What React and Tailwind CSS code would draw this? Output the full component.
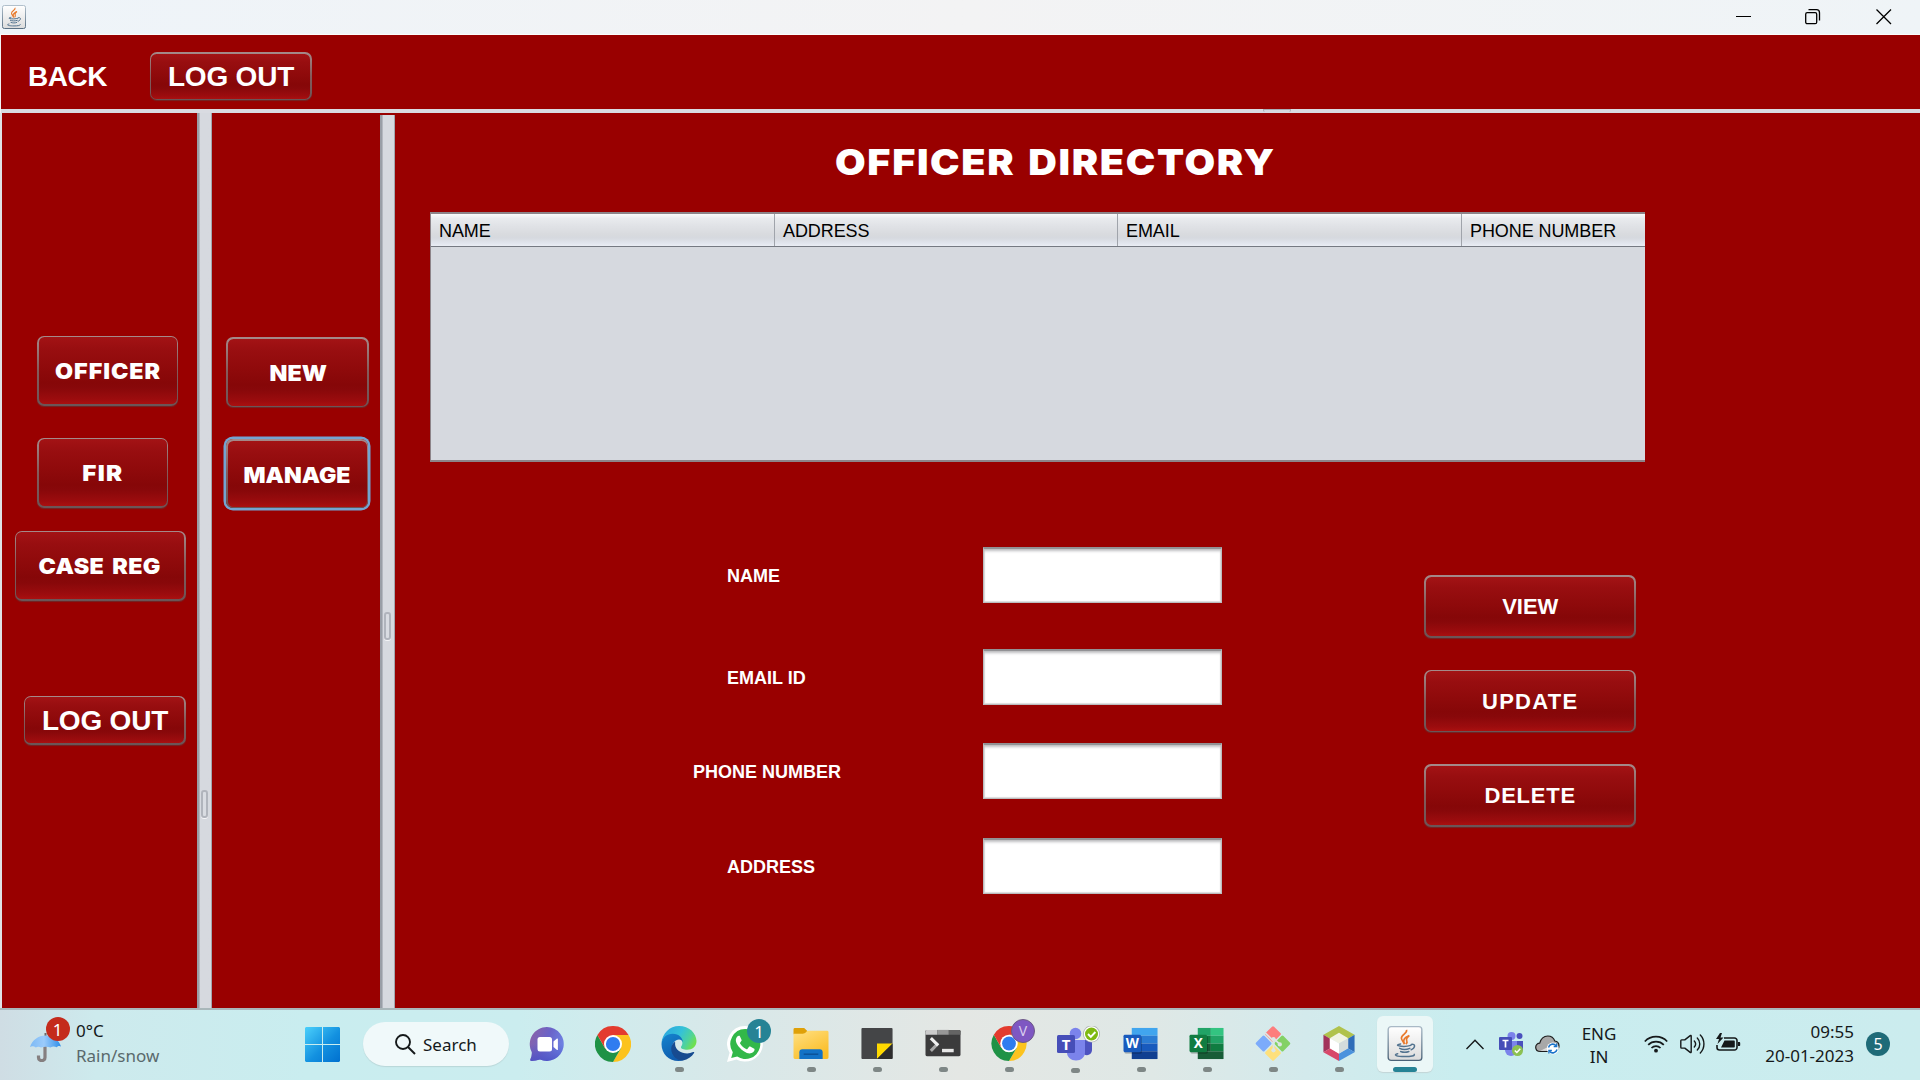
import React from "react";

const ARIAL = "font-['Liberation_Sans',Arial,sans-serif]";
const BLACK = "font-['Inter','Liberation_Sans',sans-serif] font-black";

/* ---------- Swing style widgets ---------- */

function NimbusButton({ className = "", textClass = "", focused = false, children }) {
  return (
    <button
      type="button"
      className={`flex shrink-0 rounded-[7px] bg-linear-to-b from-[#a58a8a] via-[#865a5a] to-[#6a5557] p-[1.5px] ${
        focused
          ? "shadow-[0_0_0_2.5px_#73a4d1]"
          : "shadow-[0_1px_1px_rgba(95,55,55,0.7)]"
      } ${className}`}
    >
      <span className="flex h-full w-full items-center justify-center rounded-[5.5px] bg-[linear-gradient(to_bottom,#a31315_0%,#980e10_18%,#8f0a0b_45%,#860708_68%,#88080a_76%,#9c0c0e_93%,#aa1010_100%)]">
        <span className={`leading-none whitespace-nowrap text-white ${textClass}`}>{children}</span>
      </span>
    </button>
  );
}

function Divider({ className = "", gripClass }) {
  return (
    <div className={`flex w-[15px] shrink-0 justify-center border-r border-[#a2a6ae] bg-linear-to-r from-[#999ea6] from-[14%] via-[#b4b8c0] via-[18%] to-[#d6d9df] to-[22%] ${className}`}>
      <div className={`ml-px h-[28px] w-[7px] rounded-[3px] border-2 border-[#b0b4bc] bg-[#d9dce2] shadow-[0_1px_0_#f4f5f8] ${gripClass}`} />
    </div>
  );
}

function Field() {
  return (
    <input
      type="text"
      className="h-[56px] w-[239px] border border-t-2 border-[#bcbcbe] border-t-[#929295] bg-white shadow-[inset_0_3px_3px_-1px_#bfbfc1,inset_0_0_1px_1px_#dcdcdc] outline-none"
    />
  );
}

function Column({ className, children }) {
  return (
    <div
      className={`flex h-full items-center bg-[linear-gradient(to_bottom,#fafafb_0%,#e9ebee_14%,#e1e3e7_35%,#d8dade_65%,#d6d9df_75%,#e2e6ee_92%,#eaedf4_100%)] pt-[2px] pl-[8px] ${className}`}
    >
      {children}
    </div>
  );
}

/* ---------- Icons ---------- */

function JavaCup({ size }) {
  return (
    <svg width={size} height={size} viewBox="0 0 36 36">
      <defs>
        <linearGradient id="javaTile" x1="0" y1="0" x2="0" y2="1">
          <stop offset="0" stopColor="#fff" />
          <stop offset="1" stopColor="#dcdcdc" />
        </linearGradient>
        <linearGradient id="javaEdge" x1="0" y1="0" x2="0" y2="1">
          <stop offset="0" stopColor="#a9b9c6" />
          <stop offset="1" stopColor="#4b6378" />
        </linearGradient>
      </defs>
      <rect x="0.7" y="0.7" width="34.6" height="34.6" rx="3" fill="url(#javaTile)" stroke="url(#javaEdge)" strokeWidth="1.4" />
      <path d="M19.5 4c1.6 3.200-5.600 5-5.200 8.600.3 2.400 2.500 3.600 3 6.200M17.300 18c-1.300-2.800-.6-4.500 1.500-6.200 1-.8 2.200-1.500 3.600-2-2.600 2.200-3.600 3.400-2.600 5.200.7 1.300.2 2.500-1 3.600" fill="none" stroke="#e8792b" strokeWidth="1.7" />
      <g fill="none" stroke="#53738f" strokeWidth="1.500" strokeLinecap="round">
        <path d="M13.500 18.500c-3 .5-4 1.200-2.500 1.700 3.500 1 9.500.8 13-.3" />
        <path d="M24.500 19c4.500-1 4.500 3.500-.3 5.500" />
        <path d="M12.500 23c2.500 1.200 7.500 1.200 10.500 0" />
        <path d="M13.500 26.200c2.500 1 6 1 8.500 0" />
        <path d="M10.500 28.500c-5 1.200-1.500 2.900 7.500 2.900 6 0 10.500-.8 9.500-2.200" />
      </g>
    </svg>
  );
}

function ChatIcon() {
  return (
    <svg width="36" height="36" viewBox="0 0 36 36">
      <defs>
        <linearGradient id="chat" x1="0" y1="0.2" x2="1" y2="0.6">
          <stop offset="0" stopColor="#8b62a8" />
          <stop offset="0.5" stopColor="#6a63c8" />
          <stop offset="1" stopColor="#6f86e6" />
        </linearGradient>
        <linearGradient id="chatB" x1="0" y1="0" x2="0" y2="1">
          <stop offset="0.5" stopColor="#4a4fc4" stopOpacity="0" />
          <stop offset="1" stopColor="#4a4fc4" stopOpacity="0.8" />
        </linearGradient>
      </defs>
      <path d="M18 1a17 17 0 1 1-7 32.600c-3 .8-6 1.500-8.500 1.400-1.300 0-1.500-.8-1-1.900 1-2.300 1.500-4.600 1.300-7A17 17 0 0 1 18 1Z" fill="url(#chat)" />
      <path d="M18 1a17 17 0 1 1-7 32.600c-3 .8-6 1.500-8.500 1.400-1.300 0-1.500-.8-1-1.900 1-2.300 1.500-4.600 1.300-7A17 17 0 0 1 18 1Z" fill="url(#chatB)" />
      <rect x="8.500" y="11" width="14.500" height="14.500" rx="2.500" fill="#fff" />
      <path d="M24.500 15.500 28 12.500c.4-.3.900 0 .9.500v10.500c0 .5-.5.800-.9.500l-3.500-3Z" fill="#fff" />
    </svg>
  );
}

function ChromeIcon() {
  return (
    <svg width="36" height="36" viewBox="0 0 36 36">
      <path d="M18 18 33.590 9A18 18 0 0 1 18 36L25.800 22.500Z" fill="#fcc31e" />
      <path d="M18 18 25.800 22.500 18 36A18 18 0 0 1 2.410 9L10.200 22.500Z" fill="#1f9246" />
      <path d="M18 9H33.590L25.800 22.500 18 18Z" fill="#fcc31e" />
      <path d="M18 9H33.590A18 18 0 0 0 2.410 9L10.200 22.500 18 18Z" fill="#e33b2e" />
      <circle cx="18" cy="18" r="9" fill="#fff" />
      <circle cx="18" cy="18" r="7.100" fill="#2f7cf0" />
    </svg>
  );
}

function EdgeIcon() {
  return (
    <svg width="36" height="36" viewBox="0 0 36 36">
      <defs>
        <linearGradient id="edgeTop" x1="0" y1="0.2" x2="1" y2="0.6">
          <stop offset="0" stopColor="#2aa5e0" />
          <stop offset="0.5" stopColor="#35c1d8" />
          <stop offset="0.8" stopColor="#4fd39a" />
          <stop offset="1" stopColor="#6fe04e" />
        </linearGradient>
        <linearGradient id="edgeLeft" x1="0" y1="0" x2="0.4" y2="1">
          <stop offset="0" stopColor="#1585cf" />
          <stop offset="1" stopColor="#0f5cae" />
        </linearGradient>
      </defs>
      <path d="M0 18C.6 7.500 8.500 0 18 0c10.500 0 18 7.500 18 15.500 0 6-4.500 9-9.500 9-4 0-6.500-1.200-6.500-2.600 0-1 1.500-1.900 1.500-4.400C21.500 13 17 9.500 11.500 9.500 5.500 9.500 1 13 0 18Z" fill="url(#edgeTop)" />
      <path d="M0 18.500C.5 12 5.500 8 11.500 8c6.500 0 10.500 4.500 10.500 9-.5-2-2-3.200-4-3.200-4 0-7 4.200-7 8.700 0 6.500 5 12.500 12 12.500-1.800.7-3.500 1-5.500 1C7.500 36 0 28.500 0 18.500Z" fill="url(#edgeLeft)" />
      <path d="M14 16c-2.500 2-4 4.500-4 7.500C10 30 15.500 36 22 35.500c5-.8 9-3.800 11.500-7.700.5-.8-.2-1.400-1-1-2 1-4 1.400-6 1.400-6.500 0-12-4-12.500-9Z" fill="#174b90" />
    </svg>
  );
}

function WhatsAppIcon() {
  return (
    <svg width="36" height="36" viewBox="0 0 36 36">
      <path d="M18 0a17.800 17.800 0 1 1-8.500 33.400L0 36l2.600-9.200A17.800 17.800 0 0 1 18 0Z" fill="#fff" />
      <path d="M18 3a15 15 0 1 1-7.800 27.600L4.200 32l1.600-5.800A15 15 0 0 1 18 3Z" fill="#32b849" />
      <path d="M12.300 9.800c-.6 0-1.500.2-2.200 1-2.600 3-.8 7 2.200 10.500 3.300 3.900 7.700 6.700 11.500 6 2-.4 3.500-1.900 3.700-3.300.2-1.200 0-1.300-.7-1.600l-3.600-1.800c-.6-.2-1-.1-1.300.4l-1.500 1.900c-.3.4-.7.400-1.300.1-2.500-1.100-4.500-2.800-6-5.500-.3-.5-.1-.8.200-1.100 1.400-1.600 1.500-1.900 1.200-2.600l-1.500-3.400c-.3-.6-.5-.6-.7-.6Z" fill="#fff" />
    </svg>
  );
}

function FolderIcon() {
  return (
    <svg width="36" height="36" viewBox="0 0 36 36">
      <defs>
        <linearGradient id="folder" x1="0" y1="0" x2="0.600" y2="1">
          <stop offset="0" stopColor="#ffe083" />
          <stop offset="1" stopColor="#fbbd26" />
        </linearGradient>
      </defs>
      <path d="M0 3.500A1.500 1.500 0 0 1 1.500 2H11l3.500 3.500-3 3H0Z" fill="#dfa008" />
      <path d="M0 8h9.500c1.500 0 2.200-.5 3.200-1.500S14.500 5 16 5h18.500A1.500 1.500 0 0 1 36 6.500v26a1.500 1.500 0 0 1-1.500 1.500h-33A1.500 1.500 0 0 1 0 32.500Z" fill="url(#folder)" />
      <path d="M6 34v-7a3 3 0 0 1 3-3h18a3 3 0 0 1 3 3v7Z" fill="#1272c6" />
      <path d="M10.500 29h15" stroke="#0b4f94" strokeWidth="1.400" />
    </svg>
  );
}

function StickyIcon() {
  return (
    <svg width="36" height="36" viewBox="0 0 36 36">
      <rect x="2" y="2" width="32" height="32" rx="1" fill="#444547" />
      <path d="M18 34V18h16Z" fill="#ffd900" />
      <path d="M18 34 34 18v15a1 1 0 0 1-1 1Z" fill="#2d2d2d" />
    </svg>
  );
}

function TerminalIcon() {
  return (
    <svg width="36" height="36" viewBox="0 0 36 36">
      <rect x="0" y="4" width="36" height="27" rx="1.500" fill="#3b3b3c" />
      <path d="M0 9V5.500A1.500 1.500 0 0 1 1.500 4H12v5Z" fill="#cbcbcb" />
      <path d="M12 4h12v5H12Z" fill="#979797" />
      <path d="M24 4h10.500A1.500 1.500 0 0 1 36 5.500V9H24Z" fill="#646464" />
      <path d="m12.800 18-7.300 7.500" fill="none" stroke="#a8a8a8" strokeWidth="3.200" />
      <path d="m5.500 12.500 7.500 7.500" fill="none" stroke="#efefef" strokeWidth="3.200" />
      <rect x="17" y="23.500" width="12" height="3.500" fill="#e6e6e6" />
    </svg>
  );
}

function TeamsIcon() {
  return (
    <svg className="shrink-0" width="44" height="36" viewBox="0 0 44 36">
      <path d="M27 9a4.500 4.500 0 0 1 9 0 4.500 4.500 0 0 1-9 0Z" fill="#4a50bd" />
      <path d="M26 14h9v10c0 3-2.500 5.200-5 5.200S26 28 26 25Z" fill="#4d53bf" />
      <circle cx="18.500" cy="7.500" r="5.800" fill="#7b83eb" />
      <path d="M10 14h18v12.500C28 31 24 34.500 19 34.500S10 31 10 26.500Z" fill="#7b83eb" />
      <rect x="0" y="9" width="18" height="18" rx="1.500" fill="#464eb8" />
      <text x="9" y="23.500" textAnchor="middle" fontFamily="Noto Sans, sans-serif" fontWeight="700" fontSize="15" fill="#fff">T</text>
      <circle cx="34.500" cy="8" r="8.500" fill="#aab0b0" />
      <circle cx="34.500" cy="8" r="7.700" fill="#fff" />
      <circle cx="34.500" cy="8" r="6.500" fill="#7fb912" />
      <path d="m31 8 2.800 2.800 4.600-4.800" fill="none" stroke="#fff" strokeWidth="1.900" />
    </svg>
  );
}

function WordIcon() {
  return (
    <svg width="36" height="36" viewBox="0 0 36 36">
      <rect x="8.500" y="2" width="26.500" height="8" fill="#41a5ee" />
      <path d="M8.500 10H35v8H8.500Z" fill="#2b7cd3" />
      <path d="M8.500 18H35v8H8.500Z" fill="#185abd" />
      <path d="M8.500 26H35v8H8.500Z" fill="#103f91" />
      <rect x="1" y="10.500" width="18" height="18" rx="1.500" fill="#000" opacity="0.220" />
      <rect x="0" y="9" width="18" height="18" rx="1.500" fill="#185abd" />
      <text x="9" y="23" textAnchor="middle" fontFamily="Noto Sans, sans-serif" fontWeight="700" fontSize="14" fill="#fff">W</text>
    </svg>
  );
}

function ExcelIcon() {
  return (
    <svg width="36" height="36" viewBox="0 0 36 36">
      <path d="M8.500 2H22v8H8.500Z" fill="#21a366" />
      <path d="M22 2h13v8H22Z" fill="#33c481" />
      <path d="M8.500 10H22v8H8.500Z" fill="#107c41" />
      <path d="M22 10h13v8H22Z" fill="#21a366" />
      <path d="M8.500 18H22v8H8.500Z" fill="#185c37" />
      <path d="M22 18h13v8H22Z" fill="#107c41" />
      <path d="M8.500 26H35v8H8.500Z" fill="#185c37" />
      <rect x="1" y="10.500" width="18" height="18" rx="1.500" fill="#000" opacity="0.220" />
      <rect x="0" y="9" width="18" height="18" rx="1.500" fill="#107c41" />
      <text x="9" y="23" textAnchor="middle" fontFamily="Noto Sans, sans-serif" fontWeight="700" fontSize="14" fill="#fff">X</text>
    </svg>
  );
}

function GitIcon() {
  return (
    <svg width="36" height="36" viewBox="0 0 36 36">
      <g transform="rotate(45 18 18)">
        <rect x="5" y="5" width="12.300" height="12.300" rx="1.500" fill="#fd7d7d" />
        <rect x="18.700" y="5" width="12.300" height="12.300" rx="1.500" fill="#83d165" />
        <rect x="5" y="18.700" width="12.300" height="12.300" rx="1.500" fill="#7cabfb" />
        <rect x="18.700" y="18.700" width="12.300" height="12.300" rx="1.500" fill="#fee07c" />
      </g>
      <g fill="none" stroke="#dce6e5" strokeWidth="1.800">
        <path d="m10 7 9 9" />
        <path d="M18.500 14v12" />
        <path d="m19 13 6 6" />
      </g>
      <circle cx="18.500" cy="13.500" r="2.200" fill="#dce6e5" />
      <circle cx="25" cy="19" r="2.200" fill="#dce6e5" />
      <circle cx="18.500" cy="25" r="2.200" fill="#dce6e5" />
    </svg>
  );
}

function NetBeansIcon() {
  return (
    <svg width="36" height="36" viewBox="0 0 36 36">
      <path d="M18 0 34 9 27 13 18 8 9 13 2 9Z" fill="#b0c24c" />
      <path d="M2 9 9 13V23L2 27Z" fill="#a2335b" />
      <path d="M2 27 9 23 18 28V36Z" fill="#d8486a" />
      <path d="M34 9 27 13V23L34 27Z" fill="#2f6db8" />
      <path d="M34 27 27 23 18 28V36Z" fill="#4a92dd" />
      <path d="M18 7 27.500 12.500 18 18 8.500 12.500Z" fill="#f0f3e4" />
      <path d="M8.500 12.500 18 18V28.500L8.500 23Z" fill="#fff" />
      <path d="M27.500 12.500 18 18V28.500L27.500 23Z" fill="#d3dcdc" />
    </svg>
  );
}

function UmbrellaIcon() {
  return (
    <svg width="34" height="34" viewBox="0 0 34 34">
      <defs>
        <linearGradient id="umb" x1="0" y1="0" x2="1" y2="0">
          <stop offset="0" stopColor="#7db9f5" />
          <stop offset="0.450" stopColor="#9bcbfb" />
          <stop offset="1" stopColor="#2f8fe9" />
        </linearGradient>
      </defs>
      <path d="M15.500 5v4" stroke="#6d6a6a" strokeWidth="2" />
      <path d="M15 17v12.500c0 4.200-6.500 4.200-6.500 0V27.500" fill="none" stroke="#857f80" strokeWidth="3.200" />
      <path d="M0 19C2 12 8.500 7.500 15.500 7.500S29 12 31 18.500c-1.500-.8-3.200-.7-4.200.8-2.500-1.200-4.500-1-6.300.3-2.800-1.300-6.500-1.300-9.500 0-1.700-1-3.500-1.200-5.200 0C4 18 1.800 18 0 19Z" fill="url(#umb)" />
    </svg>
  );
}

function Badge({ className, children }) {
  return (
    <span className={`absolute flex h-6 w-6 items-center justify-center rounded-full leading-none ${className}`}>
      {children}
    </span>
  );
}

function TaskCell({ open = false, active = false, children }) {
  return (
    <div className="flex h-full w-[66px] shrink-0 justify-center pt-[6px]">
      <div className={`relative flex h-[56px] w-[56px] flex-col items-center rounded-[6px] pt-[10px] ${active ? "bg-[#ebf7f7] shadow-[0_1px_1px_#c3d5d6]" : ""}`}>
        {children}
        {active && <span className="mt-[6px] h-[5px] w-6 shrink-0 rounded-full bg-[#268395]" />}
        {open && <span className="mt-[6px] h-[5px] w-[9px] shrink-0 rounded-full bg-[#7e8786]" />}
      </div>
    </div>
  );
}

/* ---------- Regions ---------- */

function TitleBar() {
  return (
    <header className="flex h-[35px] shrink-0 items-center justify-between border-b border-[#fbfcfc] bg-linear-to-r from-[#eef4f9] via-[#f3f3f4] to-[#eff4f7] pr-[28px] pl-[2px]">
      <span className="mt-[-1px]">
        <JavaCup size={24} />
      </span>
      <div className="-mt-px flex items-center gap-[54px] text-black">
        <svg width="16" height="16" viewBox="0 0 16 16" fill="none" stroke="currentColor">
          <path d="M0 7.500h15" />
        </svg>
        <svg className="-ml-px mr-px" width="16" height="16" viewBox="0 0 16 16" fill="none" stroke="currentColor" strokeWidth="1.300">
          <rect x="0.700" y="3.700" width="11" height="11" rx="1.500" />
          <path d="M3.500.7h8A3 3 0 0 1 14.500 3.700V11.500" />
        </svg>
        <svg width="16" height="16" viewBox="0 0 16 16" fill="none" stroke="currentColor" strokeWidth="1.300">
          <path d="m.5.5 14.500 14.500M15 .5.500 15" />
        </svg>
      </div>
    </header>
  );
}

function TopBar() {
  return (
    <div className={`ml-px flex h-[74px] shrink-0 items-start bg-[#990000] text-[28px] font-bold text-white ${ARIAL}`}>
      <span className="mt-[28px] ml-[27px] w-[121.500px] leading-none tracking-[-0.5px]">BACK</span>
      <NimbusButton className="mt-[17px] h-[48px] w-[162px]" textClass="pt-[2px] pl-px text-[28px] font-bold tracking-[-0.2px]">
        LOG OUT
      </NimbusButton>
    </div>
  );
}

function OfficerDirectory() {
  const rows = [
    { label: "NAME", cls: "ml-[34px] mt-0" },
    { label: "EMAIL ID", cls: "ml-[34px] mt-[46px]" },
    { label: "PHONE NUMBER", cls: "ml-0 mt-[38px]" },
    { label: "ADDRESS", cls: "ml-[34px] mt-[39px]" },
  ];
  return (
    <main className={`flex flex-1 flex-col bg-[#990000] ${ARIAL}`}>
      <h1 className={`flex h-[98px] shrink-0 items-center pl-[440px] text-[36px] leading-none text-white ${BLACK}`}>
        <span className="origin-left scale-x-110 tracking-[1.500px] [word-spacing:3px] whitespace-nowrap">OFFICER DIRECTORY</span>
      </h1>
      <section className="mt-px ml-[35px] flex h-[250px] w-[1215px] shrink-0 flex-col border-t-2 border-b-2 border-l border-[#8d8489] bg-[#d6d9df]">
        <div className="flex h-[33px] shrink-0 border-b border-[#757982] text-[18px] leading-none tracking-[-0.08px] text-black">
          <Column className="w-[344px] border-r border-[#a0a4ab]">NAME</Column>
          <Column className="w-[343px] border-r border-[#a0a4ab]">ADDRESS</Column>
          <Column className="w-[344px] border-r border-[#a0a4ab]">EMAIL</Column>
          <Column className="flex-1">PHONE NUMBER</Column>
        </div>
      </section>
      <div className="mt-[85px] flex items-start">
        <form className="ml-[298px]">
          {rows.map((r) => (
            <label key={r.label} className={`flex items-center text-[18px] leading-none font-bold text-white ${r.cls}`}>
              <span className={`pt-[2px] ${r.label === "PHONE NUMBER" ? "w-[290px]" : "w-[256px]"}`}>{r.label}</span>
              <Field />
            </label>
          ))}
        </form>
        <div className="mt-[28px] ml-[202px] flex flex-col gap-[32px]">
          <NimbusButton className="h-[62.500px] w-[211.500px]" textClass="pt-[2px] pl-px text-[22px] font-bold">VIEW</NimbusButton>
          <NimbusButton className="h-[62.500px] w-[211.500px]" textClass="pt-[2px] pl-px text-[22px] font-bold tracking-[1.300px]">UPDATE</NimbusButton>
          <NimbusButton className="h-[62.500px] w-[211.500px]" textClass="pt-[2px] pl-px text-[22px] font-bold tracking-[0.800px]">DELETE</NimbusButton>
        </div>
      </div>
    </main>
  );
}

function Tray() {
  return (
    <div className="ml-auto flex h-full items-center text-[17px] leading-none text-[#15191a]">
      <svg className="-mt-px mr-[15px]" width="18" height="11" viewBox="0 0 18 11" fill="none" stroke="currentColor" strokeWidth="1.400">
        <path d="m.5 10 8.500-8.800L17.500 10" />
      </svg>
      <svg className="-mt-[2px] mr-[12px]" width="24" height="24" viewBox="0 0 24 24">
        <circle cx="20.500" cy="4" r="3" fill="#4a50bd" />
        <path d="M15 9h9v7a4 4 0 0 1-8 2Z" fill="#4a50bd" />
        <circle cx="12.500" cy="4" r="4" fill="#7b83eb" />
        <path d="M6 9h12v9a6 6 0 0 1-12 0Z" fill="#7b83eb" />
        <rect x="0" y="5" width="13" height="13" rx="1" fill="#464eb8" />
        <path d="M3.500 8.500h6M6.500 8.500v7" stroke="#fff" strokeWidth="1.700" />
        <circle cx="18.500" cy="18.500" r="5.500" fill="#8cc152" />
        <path d="m15.800 18.500 2 2 3.500-3.800" fill="none" stroke="#fff" strokeWidth="1.500" />
      </svg>
      <svg className="mr-[21px]" width="25" height="20" viewBox="0 0 25 20">
        <path d="M5.500 16.500C2.500 16.500.7 14.500.7 12.200s1.800-4 4-4C5.800 4 9 1 12.800 1c3.500 0 6 2.300 7 5 2.500.3 4.200 2.500 4.200 5 0 3.200-2.200 5.500-5 5.500Z" fill="#a8a8a8" stroke="#1c1c1c" strokeWidth="1.200" />
        <path d="M5.500 15.800 16 10.500l5 5.300Z" fill="#dedede" />
        <circle cx="17.800" cy="13.500" r="6" fill="#fff" />
        <path d="M13.500 12.500a4.300 4.300 0 0 1 7.500-1.800M22 14.500a4.300 4.300 0 0 1-7.500 1.800" fill="none" stroke="#1a73c9" strokeWidth="1.500" />
        <path d="M21.700 8.500v3h-3M13.900 18.500v-3h3" fill="none" stroke="#1a73c9" strokeWidth="1.300" />
      </svg>
      <div className="mr-[27px] w-[36px] text-center leading-[23px]">
        <div>ENG</div>
        <div>IN</div>
      </div>
      <svg className="mr-[12px] -mt-[2px]" width="24" height="18" viewBox="0 0 24 18" fill="none" stroke="currentColor" strokeWidth="1.700">
        <path d="M.8 6.500a15.500 15.500 0 0 1 22.400 0" />
        <path d="M4.200 9.800a11 11 0 0 1 15.600 0" />
        <path d="M7.500 13a6.300 6.300 0 0 1 9 0" />
        <circle cx="12" cy="15.700" r="1.900" fill="currentColor" stroke="none" />
      </svg>
      <svg className="mr-[11px] -mt-[2px]" width="25" height="20" viewBox="0 0 25 20" fill="none" stroke="currentColor" strokeWidth="1.400" strokeLinecap="round" strokeLinejoin="round">
        <path d="M.8 6.700v6.600c0 .5.300.8.800.8h3.200l5.400 4.300c.5.400 1 .1 1-.4V2c0-.5-.5-.8-1-.4L4.800 5.900H1.600c-.5 0-.8.300-.8.800Z" />
        <path d="M14.300 7a4.500 4.500 0 0 1 0 6M17.300 4a8.500 8.500 0 0 1 0 12M20.300 1a13 13 0 0 1 0 18" />
      </svg>
      <svg className="mr-[23px] -mt-[4px]" width="25" height="20" viewBox="0 0 25 20">
        <path d="M8 5h10.500A2.500 2.500 0 0 1 21 7.500v7a2.500 2.500 0 0 1-2.500 2.500h-15A2.500 2.500 0 0 1 1 14.500V12" fill="none" stroke="currentColor" strokeWidth="1.600" />
        <path d="M22 9h1.200c.6 0 1 .5 1 1v2c0 .6-.4 1-1 1H22Z" fill="currentColor" />
        <path d="M8.500 7.500H18a.8.800 0 0 1 .8.800v5.400a.8.800 0 0 1-.8.800H5Z" fill="currentColor" />
        <path d="M4 0 0 6h3L1.500 11 7.500 4.500h-3L6 0Z" fill="currentColor" />
      </svg>
      <div className="mr-[12px] -mt-[2px] w-[90px] text-right leading-[24px]">
        <div>09:55</div>
        <div>20-01-2023</div>
      </div>
      <span className="mr-[30px] -mt-[2px] flex h-6 w-6 items-center justify-center rounded-full bg-[#1f6b78] text-[16px] leading-none text-white">5</span>
    </div>
  );
}

function Taskbar() {
  return (
    <footer className="flex h-[72px] shrink-0 items-start border-t-2 border-[#a9b7ba] bg-[linear-gradient(to_right,#cfdde4_0%,#cdeaed_5%,#c9edef_16%,#cbedef_27%,#d8e8e9_38%,#e4e7e4_50%,#dfe8e6_60%,#d3eaec_68%,#c9edef_76%,#cbecee_100%)] font-['Noto_Sans',sans-serif]">
      <div className="relative flex h-full w-[305px] shrink-0 pl-[30px]">
        <span className="mt-[18px]"><UmbrellaIcon /></span>
        <Badge className="top-[7px] left-[45.500px] bg-[#c42b1c] text-[17px] text-white">1</Badge>
        <div className="mt-[9px] ml-[12px] text-[17px] leading-[24.500px] text-[#15191a]">
          <div>0°C</div>
          <div className="text-[#5a696c]">Rain/snow</div>
        </div>
      </div>
      <svg className="mt-[17px] shrink-0" width="35" height="35" viewBox="0 0 35 35">
        <defs>
          <linearGradient id="win" x1="0" y1="0" x2="35" y2="35" gradientUnits="userSpaceOnUse">
            <stop offset="0" stopColor="#4bd0fb" />
            <stop offset="0.550" stopColor="#1391e0" />
            <stop offset="1" stopColor="#0070cf" />
          </linearGradient>
        </defs>
        <path d="M1 0H17V17H0V1ZM18 0H34L35 1V17H18ZM0 18H17V35H1L0 34ZM18 18H35V34L34 35H18Z" fill="url(#win)" />
      </svg>
      <div className="mt-[12px] ml-[23px] flex h-[44px] w-[146px] shrink-0 items-center rounded-full bg-[#f0f9fa] pl-[32px] shadow-[0_1px_1px_#b9d6d8]">
        <svg width="21" height="21" viewBox="0 0 21 21" fill="none" stroke="#15191a" strokeWidth="1.900">
          <circle cx="8" cy="8" r="7" />
          <path d="m13 13 7 7" />
        </svg>
        <span className="ml-[7px] text-[17px] leading-none text-[#15191a]">Search</span>
      </div>
      <nav className="ml-[5px] flex h-full">
        <TaskCell><ChatIcon /></TaskCell>
        <TaskCell><ChromeIcon /></TaskCell>
        <TaskCell open><EdgeIcon /></TaskCell>
        <TaskCell>
          <WhatsAppIcon />
          <Badge className="top-[3px] left-[30px] bg-[#268395] text-[17px] text-white">1</Badge>
        </TaskCell>
        <TaskCell open><FolderIcon /></TaskCell>
        <TaskCell open><StickyIcon /></TaskCell>
        <TaskCell open><TerminalIcon /></TaskCell>
        <TaskCell open>
          <ChromeIcon />
          <Badge className="top-[3px] left-[30px] border border-[#6d5a86] bg-[#7e57c2] text-[14px] text-[#d9cdf0]">V</Badge>
        </TaskCell>
        <TaskCell open><span className="flex h-9 w-9 shrink-0"><TeamsIcon /></span></TaskCell>
        <TaskCell open><WordIcon /></TaskCell>
        <TaskCell open><ExcelIcon /></TaskCell>
        <TaskCell open><GitIcon /></TaskCell>
        <TaskCell open><NetBeansIcon /></TaskCell>
        <TaskCell active><JavaCup size={36} /></TaskCell>
      </nav>
      <Tray />
    </footer>
  );
}

export default function App() {
  return (
    <div className="flex h-[1080px] w-[1920px] flex-col overflow-hidden bg-[#f1f3f5]">
      <TitleBar />
      <TopBar />
      <div className="ml-px flex h-[4px] shrink-0 justify-end bg-[#d9dbe1] pr-[629px]">
        <span className="h-[3px] w-[28px] rounded-b-[2px] border-x border-t border-[#a9adb5] bg-[#d6d9df]" />
      </div>
      <div className="flex h-[895px] shrink-0 bg-[#990000]">
        <div className="w-[2px] shrink-0 bg-[#dfe2e6]" />
        <aside className="flex w-[195px] shrink-0 flex-col items-start bg-[#990000] pt-[222.500px]">
          <NimbusButton className="ml-[35px] h-[70px] w-[141px]" textClass={`scale-x-106 pt-px pl-[2px] text-[22px] tracking-[0.900px] ${BLACK}`}>OFFICER</NimbusButton>
          <NimbusButton className="mt-[32px] ml-[35px] h-[70px] w-[131px]" textClass={`scale-x-110 pt-px pl-px text-[22px] tracking-[1.200px] ${BLACK}`}>FIR</NimbusButton>
          <NimbusButton className="mt-[23px] ml-[12.500px] h-[70px] w-[171px]" textClass={`scale-x-106 pt-px text-[22px] tracking-[0.300px] [word-spacing:3px] ${BLACK}`}>CASE REG</NimbusButton>
          <NimbusButton className="mt-[95px] ml-[21.500px] h-[49px] w-[162px]" textClass={`pt-px pl-px text-[28px] font-bold tracking-[-0.200px] ${ARIAL}`}>LOG OUT</NimbusButton>
        </aside>
        <Divider gripClass="mt-[677px]" />
        <aside className="flex w-[168px] shrink-0 flex-col items-start bg-[#990000] pt-[224px]">
          <NimbusButton className="ml-[14px] h-[70px] w-[142.500px]" textClass={`scale-x-106 pt-[2px] pl-[2px] text-[22px] ${BLACK}`}>NEW</NimbusButton>
          <NimbusButton focused className="mt-[32px] ml-[14px] h-[69px] w-[142px]" textClass={`scale-x-105 pt-[2px] text-[22px] ${BLACK}`}>MANAGE</NimbusButton>
        </aside>
        <Divider className="mt-[2px]" gripClass="mt-[497px]" />
        <OfficerDirectory />
      </div>
      <Taskbar />
    </div>
  );
}
